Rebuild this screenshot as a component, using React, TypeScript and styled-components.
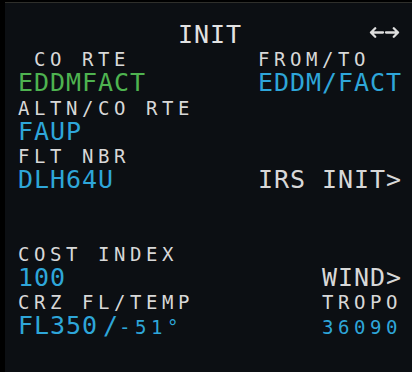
import React, { FC } from 'react';
import styled, { createGlobalStyle } from 'styled-components';

const WHITE = '#d8d8d8';
const GREEN = '#4eb350';
const BLUE = '#2ea6d9';

const GlobalStyle = createGlobalStyle`
  html, body {
    margin: 0;
    padding: 0;
    background: #000;
  }
`;

const Frame = styled.div`
  width: 412px;
  height: 372px;
  display: flex;
  box-sizing: border-box;
  padding: 2px 0 0 5px;
  background: #000;
  overflow: hidden;
`;

const Screen = styled.div`
  flex: 1;
  box-sizing: border-box;
  border-top: 1px solid #2f2f2b;
  background: #0c0f13;
  padding: 19.6px 0 0 13px;
  font-family: 'DejaVu Sans Mono', 'Liberation Mono', monospace;
`;

const Lines = styled.div`
  width: 384px;
`;

const TitleRow = styled.div`
  height: 24.3px;
  line-height: 24.3px;
  display: grid;
  grid-template-columns: 1fr auto 1fr;
  align-items: center;
`;

const LabelRow = styled.div`
  box-sizing: border-box;
  height: 24.3px;
  padding-top: 2.4px;
  line-height: 21.9px;
  display: flex;
  justify-content: space-between;
  align-items: baseline;
`;

const DataRow = styled.div`
  height: 24.3px;
  line-height: 24.3px;
  display: flex;
  justify-content: space-between;
  align-items: baseline;
`;

type Size = 'big' | 'small';

const Text = styled.span<{ $size?: Size; $color?: string }>`
  white-space: pre;
  color: ${({ $color }) => $color ?? WHITE};
  font-size: ${({ $size }) => ($size === 'small' ? '19px' : '25px')};
  letter-spacing: ${({ $size }) => ($size === 'small' ? '4.56px' : '0.95px')};
`;

const Title = styled(Text)`
  grid-column: 2;
  color: #e2e2e2;
`;

const Slash = styled.span`
  margin-left: 5px;
`;

const Temp = styled.span`
  font-size: 19px;
  letter-spacing: 4.56px;
`;

const ArrowBox = styled.span`
  grid-column: 3;
  justify-self: end;
  display: flex;
  margin: 0 2.5px 0 0;
  padding-bottom: 4px;
`;

const SwapArrows: FC = () => (
  <svg width="31" height="11" viewBox="0 0 31 11" fill="none">
    <g stroke="#dedede" strokeWidth="2.3" strokeLinecap="round" strokeLinejoin="round">
      <path d="M2 5.5h12M6.2 1.3L2 5.5l4.2 4.2" />
      <path d="M17 5.5h12M24.8 1.3L29 5.5l-4.2 4.2" />
    </g>
  </svg>
);

const Empty = () => <span />;

export default function App() {
  return (
    <>
      <GlobalStyle />
      <Frame>
        <Screen>
          <Lines>
            <TitleRow>
              <Title>INIT</Title>
              <ArrowBox>
                <SwapArrows />
              </ArrowBox>
            </TitleRow>

            <LabelRow>
              <Text $size="small"> CO RTE</Text>
              <Text $size="small">FROM/TO  </Text>
            </LabelRow>
            <DataRow>
              <Text $color={GREEN}>EDDMFACT</Text>
              <Text $color={BLUE}>EDDM/FACT</Text>
            </DataRow>

            <LabelRow>
              <Text $size="small">ALTN/CO RTE</Text>
            </LabelRow>
            <DataRow>
              <Text $color={BLUE}>FAUP</Text>
            </DataRow>

            <LabelRow>
              <Text $size="small">FLT NBR</Text>
            </LabelRow>
            <DataRow>
              <Text $color={BLUE}>DLH64U</Text>
              <Text>IRS INIT&gt;</Text>
            </DataRow>

            <LabelRow>
              <Empty />
            </LabelRow>
            <DataRow>
              <Empty />
            </DataRow>

            <LabelRow>
              <Text $size="small">COST INDEX</Text>
            </LabelRow>
            <DataRow>
              <Text $color={BLUE}>100</Text>
              <Text>WIND&gt;</Text>
            </DataRow>

            <LabelRow>
              <Text $size="small">CRZ FL/TEMP</Text>
              <Text $size="small">TROPO</Text>
            </LabelRow>
            <DataRow>
              <Text $color={BLUE}>
                FL350<Slash>/</Slash>
                <Temp>-51°</Temp>
              </Text>
              <Text $size="small" $color={BLUE}>
                36090
              </Text>
            </DataRow>
          </Lines>
        </Screen>
      </Frame>
    </>
  );
}
